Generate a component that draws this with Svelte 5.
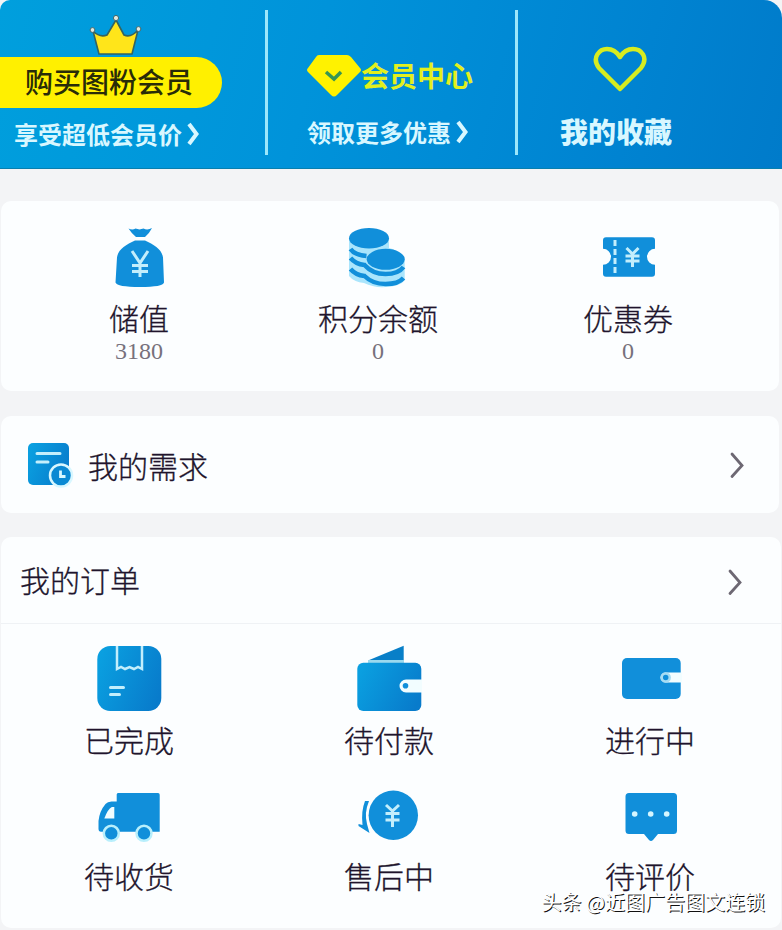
<script lang="ts">
	type Item = { icon: string; label: string; value?: number };

	const stats: Item[] = [
		{ icon: 'bag', label: '储值', value: 3180 },
		{ icon: 'coins', label: '积分余额', value: 0 },
		{ icon: 'ticket', label: '优惠券', value: 0 }
	];

	const orders: Item[] = [
		{ icon: 'box', label: '已完成' },
		{ icon: 'wallet', label: '待付款' },
		{ icon: 'card', label: '进行中' },
		{ icon: 'truck', label: '待收货' },
		{ icon: 'refund', label: '售后中' },
		{ icon: 'comment', label: '待评价' }
	];
</script>

{#snippet arrow()}
	<svg class="arrow" viewBox="0 0 16 28" width="16" height="28"><path d="M3 3l10 11.5L3 25.5" /></svg>
{/snippet}

{#snippet chevron()}
	<svg class="chevron" viewBox="0 0 14 24" width="14" height="24"><path d="M3 2l7.500 10L3 22" /></svg>
{/snippet}

<svg class="defs" width="0" height="0" aria-hidden="true">
	<defs>
		<linearGradient id="blue" x1="0" y1="0.3" x2="1" y2="0.7">
			<stop offset="0" stop-color="#0a9fe0" />
			<stop offset="1" stop-color="#087bcb" />
		</linearGradient>
	</defs>
</svg>

<div class="page">
	<header class="banner">
		<section class="promo buy">
			<svg class="crown" viewBox="0 0 54 42" width="54" height="42">
				<path d="M11 40L5 17q7 7 14 4l9-15 8 15q7 3 14-5l-6 24z" fill="#ffe51a" stroke="#35645f" stroke-width="1.6" stroke-linejoin="round" />
				<circle cx="4.500" cy="16" r="2.400" />
				<circle cx="28" cy="4" r="2.600" />
				<circle cx="50.500" cy="15" r="2.400" />
			</svg>
			<button class="pill">购买图粉会员</button>
			<p class="sub">享受超低会员价{@render chevron()}</p>
		</section>
		<section class="promo center">
			<p class="vip">
				<svg viewBox="0 0 56 46" width="56" height="46">
					<path d="M13 3h28q2 0 4 2l9 11q2 2 0 4L31 43q-3 3-6 0L2 20q-2-2 0-4L10 5q1-2 3-2z" fill="#fff200" />
					<path d="M20 20l8 7 7-7" fill="none" stroke="#369554" stroke-width="3.500" />
				</svg>
				<span>会员中心</span>
			</p>
			<p class="sub">领取更多优惠{@render chevron()}</p>
		</section>
		<section class="promo fav">
			<svg viewBox="0 0 54 48" width="54" height="48">
				<path d="M27 44L6 23C-2 12 7 4 14 4q8 0 13 8 5-8 13-8c8 0 16 8 8 19z" fill="none" stroke="#d7ec20" stroke-width="4.500" stroke-linejoin="round" />
			</svg>
			<p>我的收藏</p>
		</section>
	</header>

	<section class="card stats">
		{#each stats as item}
			<div class="stat">
				<svg class="icon" viewBox="0 0 64 64" width="64" height="64">
					{#if item.icon === 'bag'}
						<path d="M21.500 3.500q4 2 7 0l4 1 4-1q4 2 8.500-.500Q42 9 38 12h-9q-4-3-7.500-8.500zM28 15.500h10c9 4 17 9 18 17l1 25Q56 62 33 62T8.500 57.500l1.500-25c1-8 9-13 18-17z" />
						<path class="mark" d="M25 26l8 12 8-12M33 38v14M25 40.500h16M25 46.500h16" />
					{:else if item.icon === 'coins'}
						<path d="M3 14v37q5 6 15 7 10 5 22 4 15-1 18.700-7V34Q52 25 43 23V14z" fill="#aae5fc" />
						<path class="band" d="M4.500 24q4 6 16 7M4.500 33q5 6 14 7 8 9 21 9t18-7M4.500 44q5 6 14 7 8 8 21 8t18-6" />
						<ellipse cx="23" cy="13.300" rx="20" ry="10.300" />
						<ellipse cx="39.700" cy="34.300" rx="19" ry="10.500" />
					{:else}
						<path d="M10 12.300h46q3 0 3 3v8.500a8 8 0 0 0 0 16v9q0 3-3 3H10q-3 0-3-3v-9a8 8 0 0 0 0-16v-8.500q0-3 3-3z" />
						<path class="mark" d="M19 15v34" stroke-dasharray="6 3" />
						<path class="mark" d="M30.500 23l6 6 6-6M36.500 29v13M29.500 31h14M29.500 36h14" />
					{/if}
				</svg>
				<p class="label">{item.label}</p>
				<p class="value">{item.value}</p>
			</div>
		{/each}
	</section>

	<a class="card demand" href="#demand">
		<svg viewBox="0 0 48 48" width="48" height="48">
			<rect x="2" y="2" width="41" height="42" rx="5" fill="url(#blue)" />
			<path d="M11 12.500h23M11 21h11" fill="none" stroke="#c4effc" stroke-width="3" stroke-linecap="round" />
			<circle cx="35" cy="34.500" r="11" fill="#0a89d3" stroke="#d8f7ff" stroke-width="2.500" />
			<path d="M34.500 29.500v6h5" fill="none" stroke="#d8f7ff" stroke-width="2.800" />
		</svg>
		<span>我的需求</span>
		{@render arrow()}
	</a>

	<section class="card panel">
		<a class="head" href="#orders">
			<span>我的订单</span>
			{@render arrow()}
		</a>
		<div class="orders">
			{#each orders as item}
				<div class="order">
					<svg class="icon" viewBox="0 0 72 72" width="72" height="72">
						{#if item.icon === 'box'}
							<rect x="4.300" y="3" width="64" height="65" rx="13" fill="url(#blue)" />
							<path class="mark thin" d="M24 3v23l4-2 4 2 4.500-2 4.500 2 4-2 4 2V3" />
							<path class="mark" d="M17.500 44.500h13M17.500 51.500h9" stroke-linecap="round" />
						{:else if item.icon === 'wallet'}
							<path d="M15 17.500L50.700 2.700v15z" fill="#087fc8" />
							<path d="M15 17h36v3H15z" fill="#9bd9ee" />
							<rect x="4.300" y="19.700" width="64" height="48.300" rx="6" fill="url(#blue)" />
							<path class="cut" d="M69 36.500H53a6.500 6.500 0 0 0 0 13h16z" />
							<circle cx="52.500" cy="42.800" r="2.800" />
						{:else if item.icon === 'card'}
							<rect x="8" y="15" width="58.700" height="41" rx="5" />
							<path class="cut" d="M68 29.500H51.500a5 5 0 0 0 0 10H68z" />
							<circle cx="51.700" cy="34.500" r="4" stroke="#a6dcf3" stroke-width="2.500" />
						{:else if item.icon === 'truck'}
							<path d="M25 13h40q1.700 0 1.700 1.700v37H8q-2.500 0-2.500-3V41q1-10 7-17 2-2.500 6-2.500h5.200v-7Q23.700 13 25 13z" />
							<path class="cut" d="M21.300 27h-2.500q-4 2-7.500 11.500h10z" />
							<g stroke="#b8effc" stroke-width="2.500">
								<circle cx="18.300" cy="53.300" r="7.500" />
								<circle cx="51" cy="53.300" r="7.500" />
							</g>
						{:else if item.icon === 'refund'}
							<circle cx="40.300" cy="35.300" r="24.700" />
							<path d="M12 21h4q-5 12-2 23l2.500 9L5.500 46v-2l4 1Q8 31 12 21z" />
							<path class="mark" d="M33 25l6.500 6 6.500-6M39.500 31v16M32.500 33.500h14M32.500 40h14" />
						{:else}
							<path d="M15 13h44.500q3.500 0 3.500 3.500v34q0 3.500-3.500 3.500H44l-5 6q-2 2-4 0l-5-6H15q-3.500 0-3.500-3.500v-34Q11.500 13 15 13z" />
							<g fill="#d5f6ff">
								<circle cx="20.700" cy="34" r="2.800" />
								<circle cx="36.700" cy="34" r="2.800" />
								<circle cx="52.700" cy="34" r="2.800" />
							</g>
						{/if}
					</svg>
					<p class="label">{item.label}</p>
				</div>
			{/each}
		</div>
	</section>

	<p class="watermark">头条 @近图广告图文连锁</p>
</div>

<style>
	:global(body) { background: #f3f4f6; }

	.page {
		position: relative;
		display: flex;
		flex-direction: column;
		width: 782px;
		height: 930px;
		overflow: hidden;
		font-family: "Noto Sans CJK SC", sans-serif;
		font-weight: 300;
		font-size: 30px;
		line-height: 32px;
		color: #20142c;
	}
	p { margin: 0; white-space: nowrap; }
	a { color: inherit; text-decoration: none; }
	svg { display: block; flex: none; }
	.defs { position: absolute; }

	/* Banner */
	.banner {
		display: grid;
		grid-template-columns: 268px 250px 1fr;
		height: 169px;
		box-sizing: border-box;
		padding: 10px 0 13px;
		margin-bottom: 32px;
		border-radius: 10px 18px 0 0;
		border-bottom: 1px solid #087fae;
		background: linear-gradient(105deg, #009fdd 0%, #0093da 40%, #0083d1 80%, #007bca 100%);
		color: #d8f7ff;
	}
	.promo { box-sizing: border-box; }
	.buy, .center { border-right: 3px solid #9ce7fb; }
	.crown { margin: 4px 0 0 88px; fill: #e3e9df; stroke: #42686c; }
	.pill {
		display: block;
		width: 222px;
		height: 51px;
		margin-top: 1px;
		padding: 0 0 2px 25px;
		border: 0;
		border-radius: 0 26px 26px 0;
		background: #fff000;
		color: #292c08;
		font: 500 28px/49px "Noto Sans CJK SC", sans-serif;
		text-align: left;
	}
	.sub { display: flex; align-items: center; font-size: 24px; font-weight: 700; line-height: 36px; }
	.buy .sub { margin: 8px 0 0 14px; }
	.center .sub { margin: 16px 0 0 39px; }
	.chevron { margin-left: 4px; fill: none; stroke: #d8f7ff; stroke-width: 4; }
	.vip { display: flex; align-items: center; margin: 42px 0 0 38px; font-size: 28px; font-weight: 700; line-height: 46px; color: #e2f01d; }
	.vip span { margin-left: -1px; }
	.fav { padding: 35px 0 0 42px; font-size: 28px; font-weight: 900; line-height: 40px; }
	.fav svg { margin: 0 0 18px 33px; }

	/* Cards */
	.card { box-sizing: border-box; width: 778px; margin-left: 1px; border-radius: 10px; background: #fcfeff; }
	.icon { fill: #118fda; }
	.mark { fill: none; stroke: #c3eefc; stroke-width: 3; }
	.mark.thin { stroke-width: 2.5; }
	.band { fill: none; stroke: #118fda; stroke-width: 4.5; }
	.cut { fill: #f2fdff; }
	.arrow { fill: none; stroke: #6d6873; stroke-width: 2.8; stroke-linecap: round; }
	.label, .demand span, .head span { -webkit-text-stroke: 0.3px #20142c; }

	.stats { display: grid; grid-template-columns: 276px 202px 298px; height: 190px; padding-top: 24px; margin-bottom: 25px; }
	.stat { display: flex; flex-direction: column; align-items: center; }
	.stat .label { margin-top: 12px; }
	.value { margin-top: 6px; font-family: "Liberation Serif", serif; font-size: 24px; line-height: 24px; color: #77717c; }

	.demand { display: flex; align-items: center; height: 97px; padding: 0 34px 0 25px; margin-bottom: 24px; }
	.demand span { flex: 1; margin: 1px 0 0 14px; }

	.panel { width: 780px; height: 391px; }
	.head { display: flex; align-items: center; justify-content: space-between; height: 84px; padding: 2px 38px 0 19px; border-bottom: 1px solid #eff2f5; }
	.head span { margin-top: -5px; }
	.head .arrow { margin-top: 2px; }
	.orders { display: grid; grid-template-columns: 256px 264px 258px; padding-top: 19px; }
	.order { display: flex; flex-direction: column; align-items: center; height: 136px; }
	.order .label { margin-top: 8px; }
	.order:nth-child(n + 4) .icon { margin-top: 1px; }
	.order:nth-child(n + 4) .label { margin-top: 7px; }

	.watermark {
		position: absolute;
		right: 17px;
		bottom: 18px;
		font-size: 20px;
		font-weight: 400;
		line-height: 20px;
		color: #fff;
		text-shadow: 1px 1px 0 #111;
	}
</style>
